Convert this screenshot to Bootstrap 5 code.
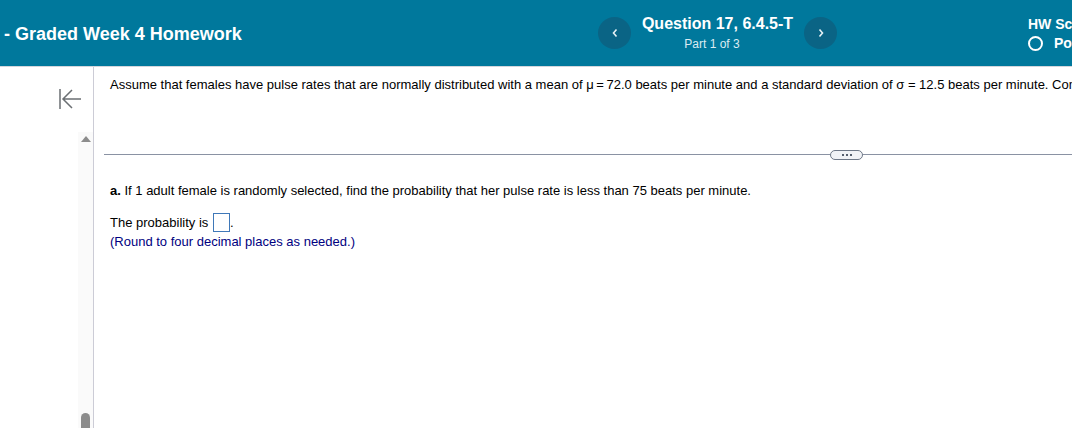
<!DOCTYPE html>
<html lang="en">
<head>
  <meta charset="UTF-8" />
  <meta name="viewport" content="width=device-width, initial-scale=1" />
  <title>Question 17, 6.4.5-T</title>
  <link href="https://cdn.jsdelivr.net/npm/bootstrap@5.3.0/dist/css/bootstrap.min.css" rel="stylesheet" />
  <style>
    html, body { height: 428px; overflow: hidden; }
    body { font-family: "Liberation Sans", Arial, sans-serif; font-size: 13px; color: #000; background: #fff; }
    .hw-header { height: 67px; background: #00789c; border-bottom: 1px solid #d4d6dc; color: #fff; }
    .hw-title { width: 598px; padding: 2px 0 0 4px; font-size: 18px; font-weight: 700; white-space: nowrap; }
    .hw-circle { width: 33px; height: 32px; border-radius: 50%; background: #0a6485; }
    .hw-question { width: 173px; line-height: 1; }
    .hw-qname { font-size: 16px; font-weight: 700; margin-bottom: 6px; white-space: nowrap; }
    .hw-qpart { font-size: 12px; color: #dcecf2; padding-right: 11px; }
    .hw-score { margin-left: 191px; padding-top: 2px; font-weight: 700; white-space: nowrap; width: 44px; overflow: hidden; flex: none; }
    .hw-score-top { font-size: 14px; line-height: 14px; }
    .hw-score-row { font-size: 14px; line-height: 16px; margin-top: 4px; }
    .hw-ring { width: 15px; height: 15px; border: 2px solid #fff; border-radius: 50%; margin-right: 11px; flex: none; }
    .hw-main { height: 361px; }
    .hw-side { width: 94px; border-right: 1px solid #ccccd6; flex: none; }
    .hw-back { height: 65px; padding: 21px 0 0 59px; }
    .hw-track { width: 15px; margin-left: 78px; background: #fafafa; height: 296px; }
    .hw-thumb { width: 9px; height: 15px; background: #8c8c8c; border-radius: 5px 5px 0 0; margin: 0 auto; }
    .hw-up { width: 0; height: 0; border-left: 5px solid transparent; border-right: 5px solid transparent; border-bottom: 6px solid #8c8c8c; margin: 4px auto 0; }
    .hw-content { min-width: 0; overflow: hidden; }
    .hw-intro { height: 83px; padding: 10px 0 0 16px; line-height: 15px; white-space: nowrap; }
    .hw-sep { padding-left: 10px; height: 9px; margin-bottom: 24px; }
    .hw-line { height: 1px; background: #8a92a3; }
    .hw-line-start { width: 726px; flex: none; }
    .hw-pill { width: 33px; height: 10px; flex: none; border: 1px solid #6e7887; border-radius: 5px; background: #f1f3f6; gap: 2px; }
    .hw-pill i { width: 2px; height: 2px; background: #56606e; display: block; }
    .hw-answer { padding-left: 16px; }
    .hw-answer p { margin: 0; line-height: 15px; white-space: nowrap; }
    .hw-answer .hw-part-a { margin-bottom: 15px; }
    .hw-answer .hw-note { color: #000080; margin-top: 2px; }
    .hw-box { display: inline-block; width: 17px; height: 19px; border: 1px solid #3f78b8; vertical-align: -5px; margin-left: 1px; }
  </style>
</head>
<body>
  <header class="hw-header d-flex align-items-center">
    <div class="hw-title">- Graded Week 4 Homework</div>
    <a class="hw-circle d-flex align-items-center justify-content-center" href="#" aria-label="Previous question">
      <svg width="8" height="10" viewBox="0 0 8 10"><path d="M5.5 1.500 2.500 5l3 3.500" fill="none" stroke="#e6f1f5" stroke-width="1.6"/></svg>
    </a>
    <div class="hw-question text-center">
      <div class="hw-qname">Question 17, 6.4.5-T</div>
      <div class="hw-qpart">Part 1 of 3</div>
    </div>
    <a class="hw-circle d-flex align-items-center justify-content-center" href="#" aria-label="Next question">
      <svg width="8" height="10" viewBox="0 0 8 10"><path d="M2.500 1.500 5.500 5l-3 3.500" fill="none" stroke="#e6f1f5" stroke-width="1.6"/></svg>
    </a>
    <!-- the window cuts these labels off, only the visible letters are known -->
    <div class="hw-score">
      <div class="hw-score-top">HW Sc</div>
      <div class="hw-score-row d-flex align-items-center"><span class="hw-ring"></span>Po</div>
    </div>
  </header>

  <div class="hw-main d-flex">
    <aside class="hw-side">
      <div class="hw-back">
        <svg width="23" height="22" viewBox="0 0 23 22"><path d="M1 1v20M22 11H5M13 2l-9 9 9 9" fill="none" stroke="#6b6f73" stroke-width="1.500"/></svg>
      </div>
      <div class="hw-track d-flex flex-column justify-content-between">
        <div class="hw-up"></div>
        <div class="hw-thumb"></div>
      </div>
    </aside>
    <main class="hw-content flex-grow-1">
      <div class="hw-intro">Assume that females have pulse rates that are normally distributed with a mean of μ&thinsp;=&thinsp;72.0 beats per minute and a standard deviation of σ = 12.5 beats per minute. Com</div>
      <div class="hw-sep d-flex align-items-center">
        <div class="hw-line hw-line-start"></div>
        <div class="hw-pill d-flex align-items-center justify-content-center"><i></i><i></i><i></i></div>
        <div class="hw-line flex-grow-1"></div>
      </div>
      <div class="hw-answer">
        <p class="hw-part-a"><b>a.</b> If 1 adult female is randomly selected, find the probability that her pulse rate is less than 75 beats per minute.</p>
        <p>The probability is <span class="hw-box"></span>.</p>
        <p class="hw-note">(Round to four decimal places as needed.)</p>
      </div>
    </main>
  </div>
</body>
</html>
